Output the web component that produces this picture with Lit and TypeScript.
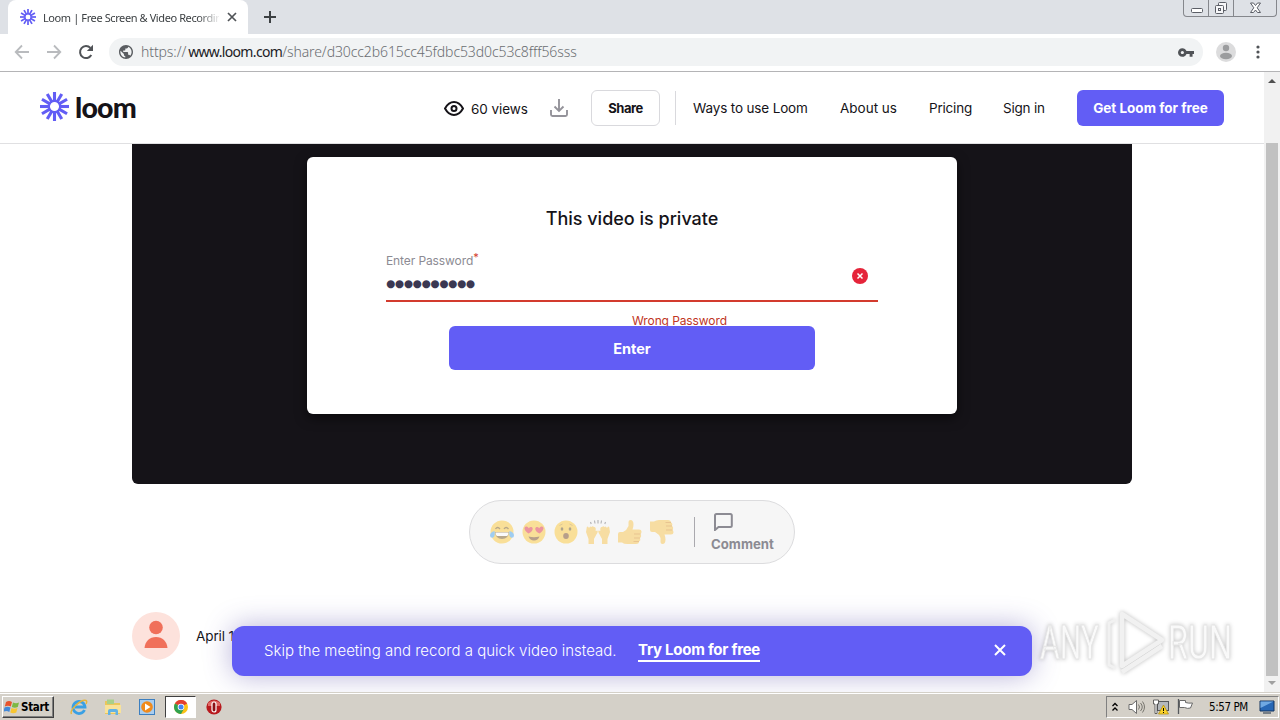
import { LitElement, html, svg, css } from 'lit';
import { customElement, property } from 'lit/decorators.js';

const rays = (inner: number, outer: number, width: number) =>
  Array.from(
    { length: 12 },
    (_, i) => svg`<line x1="0" y1=${-inner} x2="0" y2=${-outer} stroke="#625df5"
      stroke-width=${width} transform="rotate(${i * 30})" />`
  );

@customElement('loom-mark')
export class LoomMark extends LitElement {
  static override styles = css`
    :host {
      display: block;
      line-height: 0;
    }
  `;

  @property({ type: Number })
  size = 29;

  override render() {
    return html`<svg width=${this.size} height=${this.size} viewBox="-15 -15 30 30">
      ${rays(5, 15, 3.2)}
      <circle r="5.8" fill="none" stroke="#625df5" stroke-width="2.200" />
    </svg>`;
  }
}

@customElement('browser-chrome')
export class BrowserChrome extends LitElement {
  static override styles = css`
    :host {
      display: block;
      font-family: 'Noto Sans', sans-serif;
    }

    .strip {
      display: flex;
      height: 34px;
      background: #dee1e6;
      padding-left: 8px;
      box-sizing: border-box;
    }

    .tab {
      display: flex;
      align-items: center;
      width: 240px;
      box-sizing: border-box;
      padding-left: 12px;
      background: #fff;
      border-radius: 8px 8px 0 0;
    }

    .tab loom-mark {
      margin-right: 7px;
    }

    .title {
      width: 176px;
      overflow: hidden;
      white-space: nowrap;
      font-size: 11px;
      letter-spacing: -0.4px;
      color: #3c4043;
      -webkit-mask-image: linear-gradient(90deg, #000 155px, transparent 178px);
      mask-image: linear-gradient(90deg, #000 155px, transparent 178px);
    }

    .close {
      margin-left: 8px;
    }

    .new {
      margin: 10px 0 0 15px;
    }

    .window {
      display: flex;
      width: 94px;
      height: 17px;
      margin: 0 3px 0 auto;
      box-sizing: border-box;
      border: 1px solid #85878c;
      border-top: none;
      border-radius: 0 0 4px 4px;
    }

    .window span {
      display: flex;
      align-items: center;
      justify-content: center;
      width: 24px;
      border-right: 1px solid #85878c;
    }

    .window span:last-child {
      flex: 1;
      border: none;
    }

    .toolbar {
      display: flex;
      align-items: center;
      height: 38px;
      box-sizing: border-box;
      background: #fff;
      border-bottom: 1px solid #b4b4b6;
      padding: 0 15px 1px 14px;
    }

    .nav {
      display: flex;
      gap: 16px;
      width: 95px;
    }

    .omnibox {
      display: flex;
      align-items: center;
      width: 1094px;
      height: 28px;
      box-sizing: border-box;
      border-radius: 14px;
      padding: 0 9px 0 10px;
      background: #f1f3f4;
    }

    .url {
      flex: 1;
      margin: -2px 0 0 8px;
      font-size: 14px;
      font-weight: 300;
      letter-spacing: -0.1px;
      color: #6a6d71;
      white-space: nowrap;
    }

    .url b {
      margin-left: 2px;
      font-weight: 400;
      letter-spacing: -0.65px;
      color: #202124;
    }

    .profile {
      margin: 0 20px 0 13px;
    }

    svg {
      display: block;
    }
  `;

  override render() {
    return html`
      <div class="strip">
        <div class="tab">
          <loom-mark size="16"></loom-mark>
          <span class="title">Loom | Free Screen &amp; Video Recordin</span>
          <svg class="close" width="10" height="10" viewBox="0 0 10 10">
            <path d="M1 1l8 8M9 1l-8 8" stroke="#505357" stroke-width="1.7" />
          </svg>
        </div>
        <svg class="new" width="14" height="14" viewBox="0 0 14 14">
          <path d="M7 1v12M1 7h12" stroke="#3c4043" stroke-width="2" />
        </svg>
        <div class="window">
          <span>
            <svg width="13" height="13" viewBox="0 0 13 13">
              <rect x="1.500" y="6.500" width="11" height="4" rx="1" fill="#fff" stroke="#5b5e66" />
            </svg>
          </span>
          <span>
            <svg width="14" height="14" viewBox="0 0 14 14" fill="#f7f7f9" stroke="#5b5e66">
              <rect x="4.500" y="1.500" width="8" height="8" rx="1" />
              <rect x="1.500" y="4.500" width="8" height="8" rx="1" />
              <rect x="4.500" y="7.500" width="2" height="2" />
            </svg>
          </span>
          <span>
            <svg width="13" height="12" viewBox="0 0 13 12">
              <path
                d="M1.500 1h3l2 2.500 2-2.500h3l-3.300 4.800 3.300 4.700h-3l-2-2.500-2 2.500h-3l3.300-4.700z"
                fill="#fff"
                stroke="#5b5e66"
              />
            </svg>
          </span>
        </div>
      </div>
      <div class="toolbar">
        <div class="nav">
          <svg width="16" height="16" viewBox="0 0 16 16" fill="none" stroke="#b9bbbe" stroke-width="1.8">
            <path d="M15 8H2M8 1.500L1.700 8 8 14.500" />
          </svg>
          <svg width="16" height="16" viewBox="0 0 16 16" fill="none" stroke="#b9bbbe" stroke-width="1.8">
            <path d="M1 8h13M8 1.500L14.300 8 8 14.500" />
          </svg>
          <svg width="16" height="16" viewBox="0 0 16 16">
            <path d="M13.300 11A6 6 0 1 1 12.400 3.900" fill="none" stroke="#505357" stroke-width="2" />
            <path d="M15 .800v6.200H8.800z" fill="#505357" />
          </svg>
        </div>
        <div class="omnibox">
          <svg width="14" height="14" viewBox="2 2 20 20">
            <path
              d="M12 2C6.480 2 2 6.480 2 12s4.480 10 10 10 10-4.480 10-10S17.520 2 12 2zm-1 17.930c-3.950-.490-7-3.850-7-7.930 0-.620.080-1.210.210-1.790L9 15v1c0 1.100.900 2 2 2v1.930zm6.900-2.540c-.260-.810-1-1.390-1.900-1.390h-1v-3c0-.550-.450-1-1-1H8v-2h2c.550 0 1-.450 1-1V7h2c1.100 0 2-.900 2-2v-.410c2.930 1.190 5 4.060 5 7.410 0 2.080-.800 3.970-2.100 5.390z"
              fill="#5a5d61"
            />
          </svg>
          <span class="url">https://<b>www.loom.com</b>/share/d30cc2b615cc45fdbc53d0c53c8fff56sss</span>
          <svg width="16" height="9" viewBox="1 6 22 12">
            <path
              d="M12.650 10C11.830 7.670 9.610 6 7 6c-3.310 0-6 2.690-6 6s2.690 6 6 6c2.610 0 4.830-1.670 5.650-4H17v4h4v-4h2v-4H12.650zM7 14.200c-1.200 0-2.200-1-2.200-2.200s1-2.200 2.200-2.200 2.200 1 2.200 2.200-1 2.200-2.200 2.200z"
              fill="#505357"
            />
          </svg>
        </div>
        <svg class="profile" width="20" height="20" viewBox="0 0 20 20">
          <circle cx="10" cy="10" r="10" fill="#dcdcdd" />
          <circle cx="10" cy="6" r="3.200" fill="#9b9c9e" />
          <ellipse cx="10" cy="14" rx="6" ry="3.200" fill="#9b9c9e" />
        </svg>
        <svg width="4" height="14" viewBox="0 0 4 14" fill="#505357">
          <circle cx="2" cy="2" r="1.600" />
          <circle cx="2" cy="7" r="1.600" />
          <circle cx="2" cy="12" r="1.600" />
        </svg>
      </div>
    `;
  }
}

const face = svg`<circle cx="12" cy="12" r="11.500" fill="#fcc93c" />`;

const thumb = svg`<path d="M0 14q0-2 2-2h3q4-2 5.500-6V2q0-2 2-2 3 0 3 4.500 0 2.500-1 5H21q2.500 0 2.500 2t-1 2.500q1.500 2.500-.500 4 1 2.500-1 3.500 0 2.500-3 2.500H9q-3 0-5-1.500H0z" fill="#f9c650" />
  <path d="M16 14h6.500M16 18h6M15.500 21.500H21" stroke="#dc932c" />`;

const reactions = [
  // joy
  svg`${face}
    <path d="M5.500 9q2-3 4.500 0M14 9q2-3 4.500 0" fill="none" stroke="#7a5a20" stroke-width="1.300" />
    <path d="M5 12h14q-.500 7-7 7t-7-7z" fill="#7a5a20" />
    <path d="M5.500 12.500h13q0 2.500-1.500 3.500H7q-1.500-1-1.500-3.500z" fill="#fff" />
    <path d="M4.500 11q-4.500 1-4.500 4.500 0 2.500 2.500 2.300 3-.500 2-6.800zM19.500 11q4.500 1 4.500 4.500 0 2.500-2.500 2.300-3-.500-2-6.800z" fill="#4aa5ee" />`,
  // heart eyes
  svg`${face}
    <path d="M6.500 13.500C1 10 2 6 4.500 6.500q1.500 0 2.300 1.800Q8 6.500 9.500 7c2.500 1 1 5-3 6.500zM17.500 13.500C23 10 22 6 19.500 6.500q-1.500 0-2.300 1.800Q16 6.500 14.500 7c-2.500 1-1 5 3 6.500z" fill="#e2374b" />
    <path d="M6.500 16.500q5.500 1.500 11 0-1.500 4-5.500 4t-5.500-4z" fill="#7a4a20" />`,
  // open mouth
  svg`${face}
    <ellipse cx="8" cy="9" rx="1.300" ry="1.700" fill="#6b5425" />
    <ellipse cx="16" cy="9" rx="1.300" ry="1.700" fill="#6b5425" />
    <ellipse cx="12" cy="16" rx="2.800" ry="3" fill="#7a4a20" />
    <path d="M5.500 5.500l3-1.500M15.500 4l3 1.500" stroke="#c99c38" />`,
  // raised hands
  svg`<path d="M.800 7Q2 5.500 3 8q1-2.500 2.500-1 1-1.500 2.500 0 1.500-.500 1.700 1.500v2.500l1.700-.500q1 1-1 4L8 19v5H2.500v-5L0 12z" fill="#f9c650" />
    <path d="M23.200 7Q22 5.500 21 8q-1-2.500-2.500-1-1-1.500-2.500 0-1.500-.500-1.700 1.500v2.500l-1.700-.500q-1 1 1 4L16 19v5h5.500v-5l2.500-7z" fill="#f9c650" />
    <path d="M4.500 2l.700 2M8.500.500l.500 3M12 0v3.500M15.500.500L15 3.500M19.500 2l-.700 2" stroke="#6d6e74" stroke-width="1.100" />`,
  // thumbs up
  thumb,
  // thumbs down
  svg`<g transform="translate(0 24) scale(1 -1)">${thumb}</g>`,
];

@customElement('loom-page')
export class LoomPage extends LitElement {
  static override styles = css`
    :host {
      display: flex;
      position: relative;
      height: 620px;
      overflow: hidden;
      background: #fff;
      font-family: Inter, sans-serif;
      color: #151318;
    }

    svg {
      display: block;
      flex: none;
    }

    .page {
      width: 1264px;
    }

    header {
      display: flex;
      align-items: center;
      height: 72px;
      box-sizing: border-box;
      padding: 0 40px;
      border-bottom: 1px solid #e0e0e2;
      font-size: 13.5px;
      white-space: nowrap;
    }

    header loom-mark {
      margin-top: -2px;
    }

    .wordmark {
      width: 369px;
      margin: -2px 0 0 6px;
      font-family: Lato, sans-serif;
      font-weight: 900;
      font-size: 28.5px;
      letter-spacing: -0.8px;
    }

    .views {
      width: 57px;
      margin: 3px 22px 0 7px;
      letter-spacing: -0.05px;
    }

    .share {
      width: 69px;
      height: 36px;
      box-sizing: border-box;
      margin: 0 15px 0 23px;
      border: 1px solid #d9d9dd;
      border-radius: 6px;
      line-height: 34px;
      text-align: center;
      font-weight: 700;
      font-size: 13px;
      letter-spacing: -0.5px;
    }

    nav {
      display: flex;
      gap: 32px;
      height: 34px;
      margin-right: 32px;
      padding-left: 17px;
      border-left: 1px solid #d9d9dd;
      line-height: 35px;
    }

    .ways {
      width: 115px;
      letter-spacing: -0.15px;
    }

    .about {
      width: 57px;
    }

    .pricing,
    .signin {
      width: 42px;
      letter-spacing: -0.2px;
    }

    .cta {
      width: 147px;
      height: 36px;
      border-radius: 6px;
      background: #625df5;
      color: #fff;
      text-align: center;
      line-height: 37px;
      font-weight: 700;
    }

    .video {
      width: 1000px;
      height: 340px;
      margin: 0 auto 16px;
      padding-top: 13px;
      box-sizing: border-box;
      border-radius: 0 0 6px 6px;
      background: #151318;
    }

    .card {
      width: 650px;
      height: 257px;
      margin: 0 auto;
      padding: 49px 79px 0;
      box-sizing: border-box;
      border-radius: 6px;
      background: #fff;
      box-shadow: 0 4px 12px #0008;
    }

    h1 {
      margin: 0 0 21px;
      font-size: 18px;
      line-height: 26px;
      font-weight: 500;
      text-align: center;
    }

    .field {
      display: flex;
      align-items: center;
      height: 49px;
      box-sizing: border-box;
      padding: 0 10px 2px 0;
      border-bottom: 2px solid #d33b2e;
    }

    .entry {
      flex: 1;
      padding-bottom: 5px;
    }

    .label {
      height: 22px;
      line-height: 20px;
      font-size: 12px;
      letter-spacing: -0.1px;
      color: #8c8b93;
    }

    .label i {
      position: relative;
      top: -4px;
      font-style: normal;
      font-size: 11px;
      color: #d33b2e;
    }

    .dots {
      display: block;
      height: 22px;
      line-height: 20px;
      font-family: 'DejaVu Sans', sans-serif;
      font-size: 10.5px;
      color: #3b3852;
      letter-spacing: -0.3px;
    }

    .error {
      height: 24px;
      margin-left: 246px;
      padding-top: 9px;
      box-sizing: border-box;
      font-size: 12px;
      line-height: 20px;
      letter-spacing: -0.1px;
      color: #c03524;
    }

    .enter {
      position: relative;
      height: 44px;
      margin: 0 63px;
      border-radius: 6px;
      background: #625df5;
      color: #fff;
      font-size: 14.5px;
      font-weight: 700;
      line-height: 45px;
      text-align: center;
    }

    .reactions {
      display: flex;
      align-items: center;
      width: 326px;
      height: 64px;
      margin: 0 auto;
      padding-left: 20px;
      box-sizing: border-box;
      border: 1px solid #dcdcde;
      border-radius: 32px;
      background: #f6f6f6;
    }

    .emoji {
      display: flex;
      gap: 8px;
      opacity: 0.5;
    }

    .comment {
      display: flex;
      flex-direction: column;
      gap: 5px;
      height: 30px;
      margin-left: 20px;
      padding-left: 16px;
      border-left: 1px solid #aaa9ae;
      color: #8c8b93;
      font-size: 13.2px;
      font-weight: 700;
      line-height: 16px;
      white-space: nowrap;
    }

    .comment svg {
      margin: -4px 0 0 3px;
    }

    .author {
      display: flex;
      align-items: center;
      gap: 16px;
      margin: 48px 132px 0;
      font-size: 13.5px;
      letter-spacing: -0.1px;
    }

    .toast {
      position: absolute;
      left: 232px;
      top: 554px;
      display: flex;
      align-items: center;
      width: 800px;
      height: 50px;
      padding: 0 26px 2px 32px;
      box-sizing: border-box;
      border-radius: 12px;
      background: #625df5;
      color: #fff;
      font-size: 15px;
      white-space: nowrap;
      box-shadow: 0 0 28px #4a3fa066;
    }

    .skip {
      width: 374px;
      font-weight: 300;
    }

    .try {
      margin-top: 1px;
      border-bottom: 2px solid #fff;
      font-weight: 700;
      line-height: 20px;
      letter-spacing: -0.25px;
    }

    .toast svg {
      margin-left: auto;
    }

    .scroll {
      display: flex;
      flex-direction: column;
      align-items: center;
      width: 16px;
      padding: 7px 0;
      box-sizing: border-box;
      background: #f1f1f1;
    }

    .thumb {
      width: 12px;
      height: 533px;
      margin: 60px 0 5px;
      background: #c1c1c1;
    }

    .watermark {
      position: absolute;
      left: 1030px;
      top: 532px;
      filter: drop-shadow(0 0 2px #0004);
      font-family: Roboto, sans-serif;
    }
  `;

  override render() {
    return html`
      <div class="page">
        <header>
          <loom-mark size="29"></loom-mark>
          <span class="wordmark">loom</span>
          <svg width="20" height="16" viewBox="0 0 20 16" fill="none" stroke="#151318" stroke-width="2">
            <path d="M1 8.500q3.600-6.500 9-6.500t9 6.500q-3.600 6.500-9 6.500T1 8.500z" />
            <circle cx="10" cy="8.500" r="2.500" />
          </svg>
          <span class="views">60 views</span>
          <svg width="18" height="18" viewBox="0 0 18 18" fill="none" stroke="#94939a" stroke-width="1.900">
            <path d="M9 0v11.500M4.500 7.500L9 12l4.500-4.500M1 11v4.500Q1 17 2.500 17h13q1.500 0 1.500-1.500V11" />
          </svg>
          <span class="share">Share</span>
          <nav>
            <span class="ways">Ways to use Loom</span>
            <span class="about">About us</span>
            <span class="pricing">Pricing</span>
            <span class="signin">Sign in</span>
          </nav>
          <span class="cta">Get Loom for free</span>
        </header>
        <div class="video">
          <div class="card">
            <h1>This video is private</h1>
            <div class="field">
              <div class="entry">
                <div class="label">Enter Password<i>*</i></div>
                <span class="dots">${'●'.repeat(10)}</span>
              </div>
              <svg width="16" height="16" viewBox="0 0 16 16">
                <circle cx="8" cy="8" r="8" fill="#e5243a" />
                <path d="M5.500 5.500l5 5M10.500 5.500l-5 5" stroke="#fff" stroke-width="1.500" />
              </svg>
            </div>
            <div class="error">Wrong Password</div>
            <div class="enter">Enter</div>
          </div>
        </div>
        <div class="reactions">
          <div class="emoji">
            ${reactions.map(
              (shape) => html`<svg width="24" height="24" viewBox="0 0 24 24">${shape}</svg>`
            )}
          </div>
          <div class="comment">
            <svg width="19" height="18" viewBox="0 0 19 18" fill="none" stroke="#8c8b93" stroke-width="2">
              <path d="M1 17V2.500Q1 1 2.500 1h13.800q1.500 0 1.500 1.500v10q0 1.500-1.500 1.500H4.500z" />
            </svg>
            <span>Comment</span>
          </div>
        </div>
        <div class="author">
          <svg width="48" height="48" viewBox="0 0 48 48">
            <circle cx="24" cy="24" r="24" fill="#fde2dc" />
            <g fill="#f0705a">
              <circle cx="24" cy="15.500" r="6.800" />
              <path d="M12.500 36c.500-6.500 5-11 11.500-11s11 4.500 11.500 11z" />
            </g>
          </svg>
          <span>April 1</span>
        </div>
      </div>
      <div class="scroll">
        <svg width="8" height="4" viewBox="0 0 8 4"><path d="M0 4l4-4 4 4z" fill="#505050" /></svg>
        <div class="thumb"></div>
        <svg width="8" height="4" viewBox="0 0 8 4"><path d="M0 0l4 4 4-4z" fill="#a0a0a0" /></svg>
      </div>
      <div class="toast">
        <span class="skip">Skip the meeting and record a quick video instead.</span>
        <span class="try">Try Loom for free</span>
        <svg width="12" height="12" viewBox="0 0 12 12">
          <path d="M1 1l10 10M11 1L1 11" stroke="#fff" stroke-width="2" />
        </svg>
      </div>
      <svg class="watermark" width="220" height="80" viewBox="0 0 220 80">
        <g fill="#fff" fill-opacity=".85" stroke="#e4e4e4" stroke-width=".8" font-size="48">
          <text x="10" y="55" textLength="59" lengthAdjust="spacingAndGlyphs">ANY</text>
          <text x="138" y="55" textLength="64" lengthAdjust="spacingAndGlyphs">RUN</text>
        </g>
        <g fill="none" stroke="#f1f1f1" stroke-width="4.500" stroke-linejoin="round">
          <path d="M92 10l40 26-40 26zM92 68l40-26" />
          <path d="M85 16l-6 3v42l6 3" stroke-width="3" />
        </g>
      </svg>
    `;
  }
}

@customElement('task-bar')
export class TaskBar extends LitElement {
  static override styles = css`
    :host {
      display: flex;
      align-items: center;
      height: 28px;
      box-sizing: border-box;
      padding: 1px 1px 0 2px;
      border-top: 1px solid #d4d0c8;
      background: #d4d0c8;
      box-shadow: inset 0 1px #fff;
      font-family: 'DejaVu Sans Condensed', 'DejaVu Sans', sans-serif;
      font-size: 12px;
      color: #000;
    }

    svg {
      display: block;
    }

    .start {
      display: flex;
      align-items: center;
      gap: 1px;
      width: 52px;
      height: 22px;
      box-sizing: border-box;
      padding-left: 1px;
      border: 1px solid;
      border-color: #fff #404040 #404040 #fff;
      box-shadow: inset -1px -1px #808080;
      font-weight: 700;
      font-size: 11.5px;
      letter-spacing: -0.3px;
    }

    .launch {
      display: flex;
      align-items: center;
      margin-left: 16px;
    }

    .launch > svg {
      margin-right: 16px;
    }

    .active {
      display: flex;
      align-items: center;
      justify-content: center;
      width: 31px;
      height: 22px;
      box-sizing: border-box;
      margin: 0 10px 0 -7px;
      border: 1px solid;
      border-color: #404040 #fff #fff #404040;
      background: #fff;
    }

    .tray {
      display: flex;
      align-items: center;
      width: 173px;
      height: 22px;
      box-sizing: border-box;
      margin-left: auto;
      padding-left: 4px;
      border: 1px solid;
      border-color: #808080 #fff #fff #808080;
    }

    .speaker {
      margin-left: 9px;
    }

    .network {
      margin-left: 7px;
    }

    .flag {
      margin-left: 8px;
    }

    .clock {
      width: 42px;
      margin: 0 8px 0 15px;
      white-space: nowrap;
      font-size: 11.5px;
      letter-spacing: -0.4px;
    }
  `;

  override render() {
    return html`
      <div class="start">
        <svg width="16" height="16" viewBox="0 0 16 16">
          <path d="M2 3q3-2 6 0L6.800 7.500Q4 6 .800 7.500z" fill="#e8542c" />
          <path d="M9 3.500q3 1.500 6 0L13.800 8q-3 1.500-6 0z" fill="#7db843" />
          <path d="M.500 8.500q3-1.500 6 0L5.300 13q-3-2-6 0z" fill="#4389d8" />
          <path d="M7.500 9q3 1.500 6 0L12.300 13.500q-3 1.500-6 0z" fill="#f8c632" />
        </svg>
        <span>Start</span>
      </div>
      <div class="launch">
        <svg width="18" height="18" viewBox="0 0 18 18" fill="none">
          <path d="M14.500 12A6 6 0 1 1 15 9H5" stroke="#3aa0e4" stroke-width="2.800" />
          <path d="M1.500 16C-1 12 11 1 16 2.500q1.500.700 0 3.500" stroke="#e7b53a" stroke-width="1.400" />
        </svg>
        <svg width="18" height="18" viewBox="0 0 18 18">
          <path d="M1 3h5l1 2h9v11H1z" fill="#e9c65c" />
          <path d="M3 1.500h7V6H3z" fill="#a8d08a" />
          <path d="M1 7h16v8H1z" fill="#f8e29a" />
          <path d="M4 17v-4q0-2 2-2h6q2 0 2 2v4h-2.500v-3h-5v3z" fill="#62b2e4" />
        </svg>
        <svg width="18" height="18" viewBox="0 0 18 18">
          <rect x="1.500" y="1.500" width="15" height="15" fill="#a9cdef" stroke="#3c7fc0" />
          <circle cx="9" cy="9" r="5.800" fill="#f08a1c" />
          <path d="M7 5.500L12.500 9 7 12.500z" fill="#fff" />
        </svg>
        <div class="active">
          <svg width="14" height="14" viewBox="0 0 14 14">
            <circle cx="7" cy="7" r="7" fill="#fbc116" />
            <path d="M7 7L.940 3.500A7 7 0 0 1 13.100 3.500z" fill="#e23f32" />
            <path d="M7 7L.940 3.500A7 7 0 0 0 7 14l3-5.200z" fill="#30a24f" />
            <circle cx="7" cy="7" r="3.300" fill="#fff" />
            <circle cx="7" cy="7" r="2.500" fill="#4285f4" />
          </svg>
        </div>
        <svg width="16" height="16" viewBox="0 0 16 16">
          <circle cx="8" cy="8" r="7.600" fill="#b81a1e" />
          <path d="M2 4q6-5 12 0v3H2z" fill="#e06a66" />
          <rect x="6" y="3" width="4" height="10" rx="2" fill="#8b1014" stroke="#fff" stroke-width="1.200" />
        </svg>
      </div>
      <div class="tray">
        <svg width="8" height="10" viewBox="0 0 8 10" fill="none" stroke="#000" stroke-width="1.300">
          <path d="M1.500 4L4 1.500 6.500 4M1.500 8.500L4 6l2.500 2.500" />
        </svg>
        <svg class="speaker" width="18" height="16" viewBox="0 0 18 16">
          <path d="M1 5.500h3L8.500 1.500v13L4 10.500H1z" fill="#fff" stroke="#6a6a6a" />
          <path d="M10.500 5.500q2 2.500 0 5M12.500 4q3.500 4 0 8M14.500 2.500q4 5.500 0 11" fill="none" stroke="#77756f" />
        </svg>
        <svg class="network" width="16" height="16" viewBox="0 0 16 16">
          <rect x="4.500" y="2.500" width="11" height="9" fill="#b4b8bc" stroke="#55585c" />
          <path d="M0.500 1h5v4H4v9.500H2V5H.500z" fill="#fff" stroke="#444" stroke-width=".8" />
          <path d="M10.500 6l5 9h-10z" fill="#fad22b" stroke="#b08a00" stroke-width=".7" />
          <path d="M10.500 9v3M10.500 13v1" stroke="#000" />
        </svg>
        <svg class="flag" width="17" height="16" viewBox="0 0 17 16">
          <path d="M2.500 1.500h6v2q3 1 7 .500l-2 5q-3 1-6-.500H2.500z" fill="#fff" stroke="#6a6a6a" />
          <path d="M1.500 0v15" stroke="#55585c" stroke-width="1.300" />
        </svg>
        <span class="clock">5:57 PM</span>
        <svg width="16" height="14" viewBox="0 0 16 14">
          <path d="M1 1h14v10H1z" fill="#2767b5" stroke="#14345f" />
          <path d="M1.500 1.500h13L1.500 8z" fill="#6fa8e2" />
          <path d="M4 13h8" stroke="#5a6470" stroke-width="1.500" />
        </svg>
      </div>
    `;
  }
}

@customElement('app-root')
export class AppRoot extends LitElement {
  static override styles = css`
    :host {
      display: flex;
      flex-direction: column;
      width: 1280px;
      height: 720px;
      overflow: hidden;
    }
  `;

  override render() {
    return html`
      <browser-chrome></browser-chrome>
      <loom-page></loom-page>
      <task-bar></task-bar>
    `;
  }
}
